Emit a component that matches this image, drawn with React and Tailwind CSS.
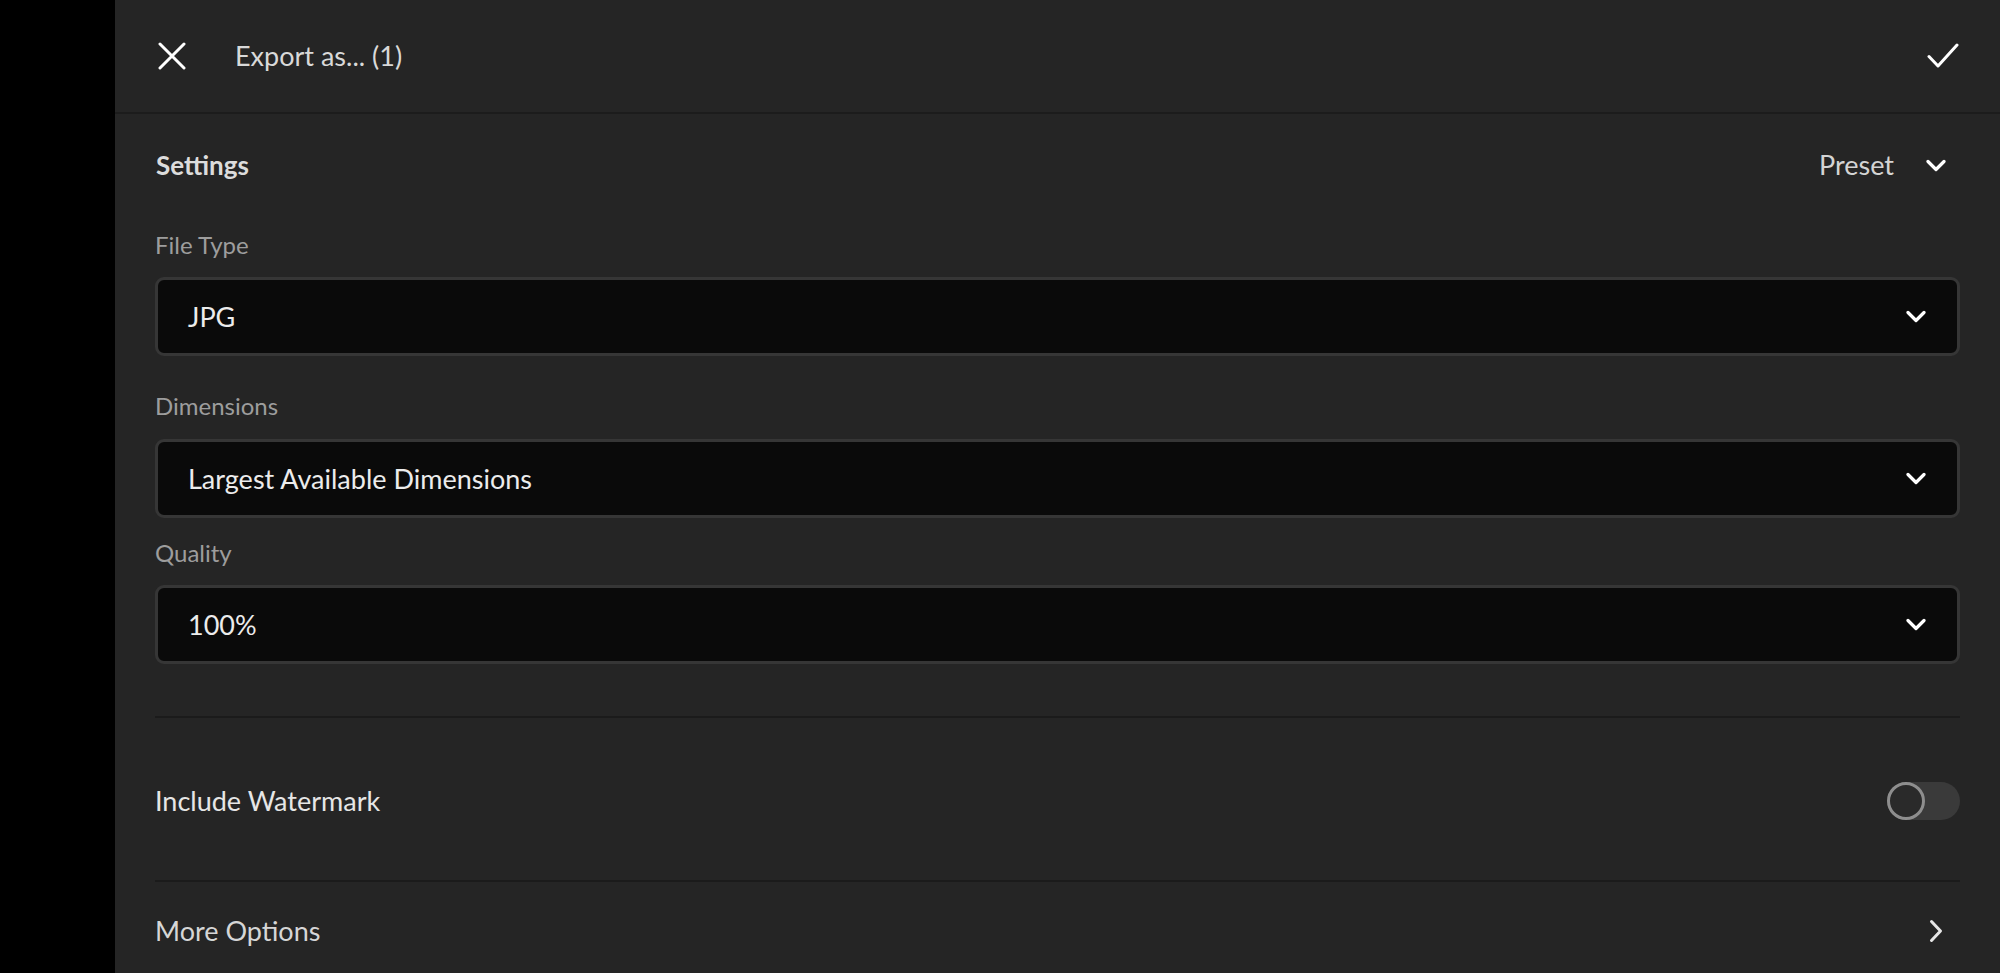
import React, { useState } from "react";

const font = { fontFamily: "Lato, 'Open Sans', sans-serif" };

const ChevronDown = ({ className }) => (
  <svg className={className} viewBox="0 0 20 13" fill="none" stroke="currentColor" strokeWidth="3.2" strokeLinecap="round" strokeLinejoin="round">
    <path d="M2 2.5l8 8 8-8" />
  </svg>
);

const Select = ({ value }) => (
  <div className="flex h-[79px] items-center justify-between rounded-[9px] border-[3px] border-[#363636] bg-[#0a0a0a] pl-[30px] pr-[31px]">
    <span className="pt-[2px] text-[27px] text-[#ececec]">{value}</span>
    <ChevronDown className="h-[13px] w-[20px] text-white" />
  </div>
);

const Label = ({ children, className }) => (
  <div className={`text-[24px] leading-[32px] text-[#9d9d9d] ${className}`}>{children}</div>
);

export default function App() {
  const [watermark, setWatermark] = useState(false);

  return (
    <div className="flex h-[973px] w-full overflow-hidden bg-black" style={font}>
      <div className="w-[115px] shrink-0 bg-black" />
      <div className="flex flex-1 flex-col bg-[#252525]">
        <header className="flex h-[114px] shrink-0 items-center border-b-2 border-[#1c1c1c] pl-[43px] pr-[41px]">
          <svg className="h-[28px] w-[28px] text-white" viewBox="0 0 28 28" fill="none" stroke="currentColor" strokeWidth="3" strokeLinecap="round">
            <path d="M2 2l24 24M26 2L2 26" />
          </svg>
          <h1 className="ml-[49px] text-[27px] text-[#d9d9d9]">Export as... (1)</h1>
          <svg className="ml-auto h-[26px] w-[32px] text-white" viewBox="0 0 32 26" fill="none" stroke="currentColor" strokeWidth="3" strokeLinecap="round" strokeLinejoin="round">
            <path d="M2 13.5l9 9.5L30 2" />
          </svg>
        </header>

        <div className="flex flex-col px-[40px]">
          <div className="flex h-[100px] items-center justify-between pl-[1px] pt-[2px]">
            <span className="text-[26px] font-bold text-[#dcdcdc]">Settings</span>
            <div className="flex items-center gap-[32px] pr-[14px]">
              <span className="text-[27px] text-[#d4d4d4]">Preset</span>
              <ChevronDown className="h-[13px] w-[20px] text-white" />
            </div>
          </div>

          <Label className="mt-[15px]">File Type</Label>
          <div className="mt-[16px]">
            <Select value="JPG" />
          </div>

          <Label className="mt-[34px]">Dimensions</Label>
          <div className="mt-[17px]">
            <Select value="Largest Available Dimensions" />
          </div>

          <Label className="mt-[19px]">Quality</Label>
          <div className="mt-[16px]">
            <Select value="100%" />
          </div>

          <div className="mt-[52px] h-[2px] bg-[#1b1b1b]" />

          <div className="flex h-[162px] items-center justify-between pt-[4px]">
            <span className="text-[27px] text-[#e6e6e6]">Include Watermark</span>
            <button
              onClick={() => setWatermark(!watermark)}
              className="relative h-[38px] w-[73px] rounded-full bg-[#3a3a3a]"
            >
              <span
                className={`absolute top-0 h-[38px] w-[38px] rounded-full border-[3px] border-[#8e8e8e] bg-[#2a2a2a] ${watermark ? "right-0" : "left-0"}`}
              />
            </button>
          </div>

          <div className="h-[2px] bg-[#1b1b1b]" />

          <div className="flex h-[98px] items-center justify-between">
            <span className="text-[27px] text-[#d6d6d6]">More Options</span>
            <svg className="mr-[17px] h-[24px] w-[14px] text-[#e6e6e6]" viewBox="0 0 14 24" fill="none" stroke="currentColor" strokeWidth="3" strokeLinecap="round" strokeLinejoin="round">
              <path d="M2.5 2.5l9 9.5-9 9.5" />
            </svg>
          </div>
        </div>
      </div>
    </div>
  );
}
